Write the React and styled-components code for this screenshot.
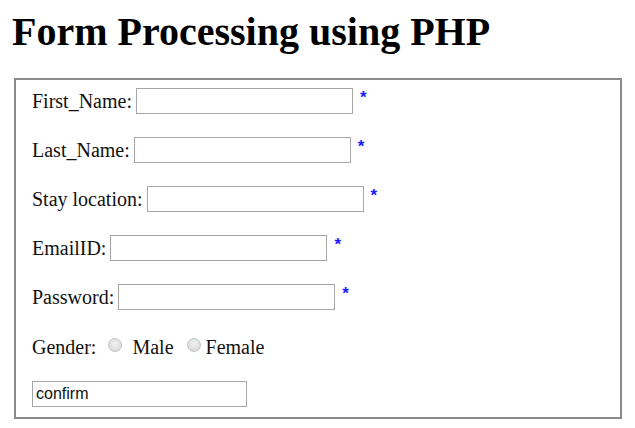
import React from "react";
import styled, { createGlobalStyle } from "styled-components";

const GlobalStyle = createGlobalStyle`
  body {
    margin: 0;
    background: #ffffff;
    font-family: "Liberation Serif", "Times New Roman", serif;
    color: #111111;
  }
`;

const Page = styled.div`
  padding: 0 13px 0 14px;
`;

const Title = styled.h1`
  margin: 0;
  padding: 9px 0 0 0;
  margin-left: -2px;
  font-size: 40px;
  line-height: 46px;
  font-weight: bold;
  color: #000000;
`;

const Box = styled.fieldset`
  margin: 23px 0 0 0;
  padding: 8px 16px 10px 16px;
  border: 2px solid #8a8a8a;
  display: flex;
  flex-direction: column;
  gap: 23px;
`;

const Row = styled.div`
  display: flex;
  align-items: center;
  height: 26px;
  font-size: 20px;
  margin-top: ${(p) => p.$top || 0}px;
`;

const Label = styled.label`
  margin-right: 4px;
  white-space: nowrap;
`;

const TextInput = styled.input`
  box-sizing: border-box;
  width: ${(p) => p.$width || 217}px;
  height: 26px;
  border: 1px solid #a6a6a6;
  padding: 0 3px;
  font-family: "Liberation Sans", Arial, sans-serif;
  font-size: 16px;
  color: #111;
  outline: none;
`;

const Star = styled.span`
  color: #1a1aff;
  font-family: "Liberation Sans", Arial, sans-serif;
  font-weight: bold;
  font-size: 17px;
  margin-left: 7px;
  position: relative;
  top: -3px;
`;

const Radio = styled.input.attrs({ type: "radio" })`
  appearance: none;
  width: 14px;
  height: 14px;
  margin: 0 ${(p) => p.$after || 0}px 0 ${(p) => p.$before || 0}px;
  border-radius: 50%;
  border: 1px solid #c4c4c4;
  background: radial-gradient(circle at 50% 40%, #f2f2f2 0%, #dcdcdc 70%, #cfcfcf 100%);
  position: relative;
  top: -2px;
`;

const fields = [
  { label: "First_Name:", name: "fname", type: "text" },
  { label: "Last_Name:", name: "lname", type: "text" },
  { label: "Stay location:", name: "location", type: "text" },
  { label: "EmailID:", name: "email", type: "text" },
  { label: "Password:", name: "password", type: "password" },
];

export default function App() {
  return (
    <Page>
      <GlobalStyle />
      <Title>Form Processing using PHP</Title>
      <Box>
        {fields.map((f) => (
          <Row key={f.name}>
            <Label htmlFor={f.name}>{f.label}</Label>
            <TextInput id={f.name} name={f.name} type={f.type} />
            <Star>*</Star>
          </Row>
        ))}
        <Row $top={1}>
          <Label>Gender:</Label>
          <Radio name="gender" value="male" $before={8} $after={10} />
          <span>Male</span>
          <Radio name="gender" value="female" $before={13} $after={5} />
          <span>Female</span>
        </Row>
        <Row $top={-2}>
          <TextInput type="text" defaultValue="confirm" $width={215} />
        </Row>
      </Box>
    </Page>
  );
}
